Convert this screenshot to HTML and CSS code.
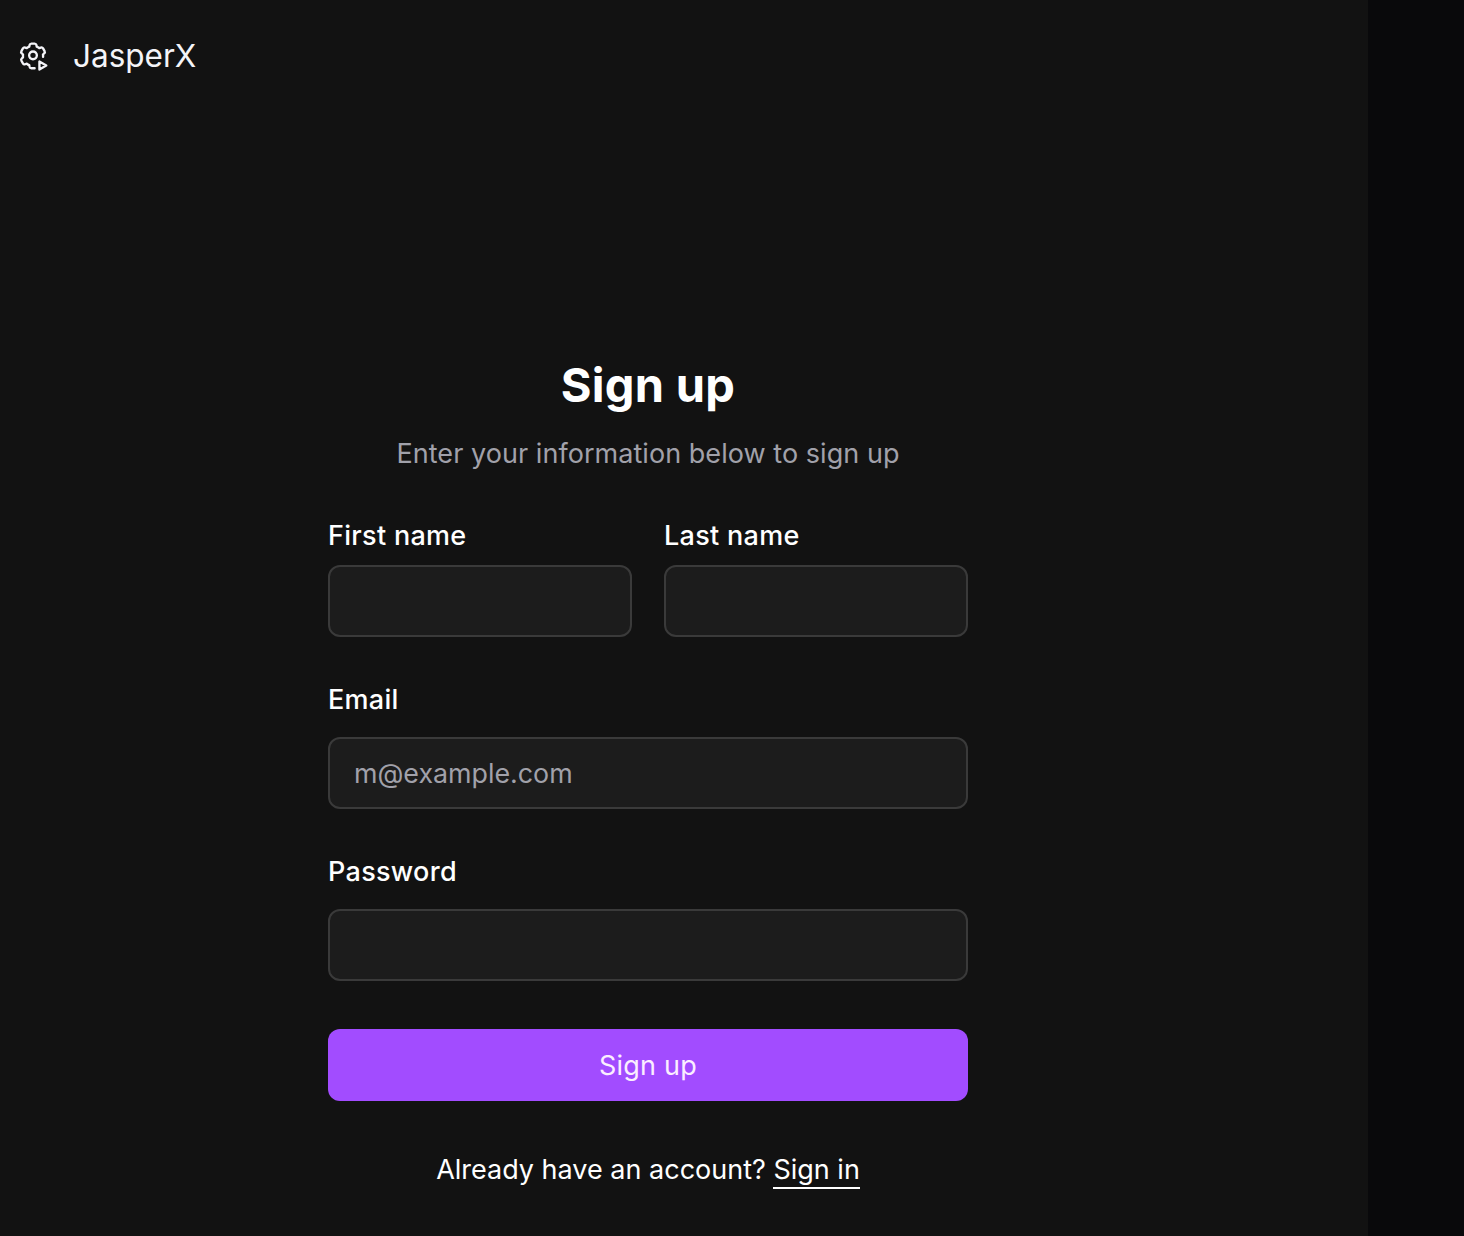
FILE: index.html
```html
<!DOCTYPE html>
<html lang="en">
<head>
    <meta charset="UTF-8">
    <meta name="viewport" content="width=device-width, initial-scale=1.0">
    <title>Sign up - JasperX</title>
    <link rel="stylesheet" href="styles.css">
</head>
<body>
    <div class="page">
        <header class="brand">
            <svg class="brand-icon" viewBox="0 0 28 28" fill="none" stroke="currentColor" stroke-width="2.2" stroke-linecap="round" stroke-linejoin="round">
                <path d="M15.5 25.4h-3a1.8 1.8 0 0 1-1.7-1.4l-.3-1.5a9 9 0 0 1-2.3-1.3l-1.5.5a1.8 1.8 0 0 1-2.1-.8l-1.4-2.5a1.8 1.8 0 0 1 .4-2.2l1.1-1a9 9 0 0 1 0-2.6l-1.1-1a1.8 1.8 0 0 1-.4-2.2l1.4-2.5a1.8 1.8 0 0 1 2.1-.8l1.5.5a9 9 0 0 1 2.3-1.3l.3-1.5a1.8 1.8 0 0 1 1.7-1.4h3a1.8 1.8 0 0 1 1.7 1.4l.3 1.5a9 9 0 0 1 2.3 1.3l1.5-.5a1.8 1.8 0 0 1 2.1.8l1.4 2.5a1.8 1.8 0 0 1-.4 2.2l-1.1 1a9 9 0 0 1 .1 2.2"/>
                <circle cx="14" cy="13.4" r="3.6"/>
                <path d="M20 19.2v7.4l6.4-3.7z" fill="#121212"/>
            </svg>
            <span class="brand-name">JasperX</span>
        </header>

        <main class="signup">
            <h1 class="signup-title">Sign up</h1>
            <p class="signup-sub">Enter your information below to sign up</p>

            <form class="signup-form">
                <div class="name-row">
                    <div class="field">
                        <label class="field-label" for="first">First name</label>
                        <input class="field-input" id="first" type="text">
                    </div>
                    <div class="field">
                        <label class="field-label" for="last">Last name</label>
                        <input class="field-input" id="last" type="text">
                    </div>
                </div>
                <div class="field">
                    <label class="field-label" for="email">Email</label>
                    <input class="field-input" id="email" type="email" placeholder="m@example.com">
                </div>
                <div class="field">
                    <label class="field-label" for="password">Password</label>
                    <input class="field-input" id="password" type="password">
                </div>
                <button class="submit-button" type="button">Sign up</button>
            </form>

            <p class="signin-line">Already have an account? <a class="signin-link" href="#">Sign in</a></p>
        </main>
    </div>
</body>
</html>
```
FILE: styles.css
```css
* { box-sizing: border-box; }

html, body { height: 100%; }

body {
    margin: 0;
    background: #09090b;
    color: #fff;
    font-family: Inter, "Liberation Sans", sans-serif;
}

.page {
    width: 1368px;
    height: 1236px;
    background: #121212;
    overflow: hidden;
}

/* Logo row */
.brand {
    display: flex;
    align-items: center;
    gap: 25px;
    padding: 38px 0 0 18px;
    height: 74px;
}

.brand-icon {
    width: 30px;
    height: 30px;
    color: #f4f4f8;
}

.brand-name {
    font-size: 31.5px;
    line-height: 36px;
    color: #f4f4f8;
}

.signup {
    width: 640px;
    margin-left: 328px;
    padding-top: 281px;
    text-align: center;
}

.signup-title {
    margin: 0;
    font-size: 47px;
    line-height: 60px;
    font-weight: 700;
    letter-spacing: 0.3px;
}

.signup-sub {
    margin: 21px 0 0;
    font-size: 27px;
    line-height: 36px;
    letter-spacing: 0.05px;
    color: #a1a1aa;
}

.signup-form {
    display: flex;
    flex-direction: column;
    gap: 45px;
    margin-top: 46px;
    text-align: left;
}

.name-row {
    display: grid;
    grid-template-columns: 1fr 1fr;
    gap: 32px;
}

.field-label {
    display: block;
    font-size: 27px;
    line-height: 36px;
    font-weight: 500;
    letter-spacing: 0.3px;
    margin-bottom: 19px;
}

.name-row .field-label { margin-bottom: 11px; }

.field-input {
    display: block;
    width: 100%;
    height: 72px;
    padding: 0 24px;
    background: #1c1c1c;
    border: 2px solid #3a3a3a;
    border-radius: 12px;
    color: #fff;
    font-family: inherit;
    font-size: 26.8px;
    outline: none;
}

.field-input::placeholder { color: #a1a1aa; }

.submit-button {
    height: 72px;
    margin-top: 3px;
    background: #a24cff;
    border: none;
    border-radius: 12px;
    color: #fbeeff;
    font-family: inherit;
    font-size: 27px;
    font-weight: 400;
    letter-spacing: 0.2px;
}

.signin-line {
    margin: 51px 0 0;
    font-size: 27px;
    line-height: 36px;
}

.signin-link {
    color: #fff;
    text-decoration: none;
    padding-bottom: 1px;
    border-bottom: 2px solid #fff;
}
```
